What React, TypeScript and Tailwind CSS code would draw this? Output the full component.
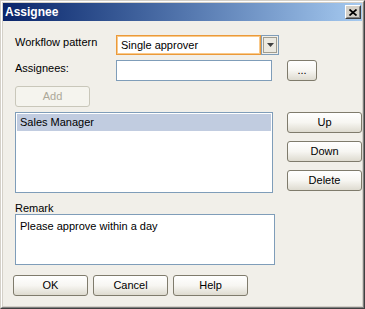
import React from "react";

const font = { fontFamily: '"Liberation Sans", Arial, sans-serif' };

function Btn({ children, className = "", disabled = false }: { children: React.ReactNode; className?: string; disabled?: boolean }) {
  return (
    <div
      className={
        "h-[21px] w-[75px] flex items-center justify-center rounded-[3px] border text-[11px] leading-[13px] " +
        (disabled
          ? "border-[#c9c7ba] bg-[#f5f4ee] text-[#aca899] "
          : "border-[#7f7b6c] bg-gradient-to-b from-white via-[#f7f6f2] to-[#dedbd0] text-black ") +
        className
      }
    >
      {children}
    </div>
  );
}

export default function App() {
  return (
    <div style={font} className="w-[365px] h-[309px] border border-t-[#d4d0c8] border-l-[#d4d0c8] border-r-[#404040] border-b-[#404040]">
      <div className="w-full h-full border border-t-white border-l-white border-r-[#808080] border-b-[#808080]">
        <div className="w-full h-full border border-[#d4d0c8] flex flex-col bg-[#f1efe9]">
          {/* Title bar */}
          <div className="h-[18px] flex items-center bg-gradient-to-r from-[#0a246a] to-[#a6caf0] shrink-0">
            <span className="pl-[2px] text-[12px] leading-[18px] font-bold text-white">Assignee</span>
            <div className="ml-auto mr-[1px] w-[16px] h-[14px] bg-[#d4d0c8] border border-t-white border-l-white border-r-[#404040] border-b-[#404040] flex">
              <div className="w-full h-full border border-t-[#d4d0c8] border-l-[#d4d0c8] border-r-[#808080] border-b-[#808080] flex items-center justify-center">
                <svg width="8" height="7" viewBox="0 0 8 7">
                  <path d="M0.5 0.5 L7.5 6.5 M7.5 0.5 L0.5 6.5" stroke="black" strokeWidth="1.7" />
                </svg>
              </div>
            </div>
          </div>

          {/* Body */}
          <div className="flex flex-col pl-[12px] pt-[14px] text-[11px] leading-[13px] text-black">
            {/* Row 1 */}
            <div className="flex items-start h-[20px]">
              <div className="w-[101px] pt-[1px]">Workflow pattern</div>
              <div className="flex h-[20px]">
                <div className="w-[145px] h-full border border-[#eb9a3a] bg-white shadow-[inset_0_0_0_1px_#f9c98a] flex items-center pl-[4px]">
                  Single approver
                </div>
                <div className="w-[18px] h-full border border-[#7f9db9] p-[1px]">
                  <div className="w-full h-full border border-[#a09d90] bg-[#ebe9e1] flex items-center justify-center">
                    <svg width="7" height="4" viewBox="0 0 7 4">
                      <path d="M0 0 H7 L3.5 4 Z" fill="#404040" />
                    </svg>
                  </div>
                </div>
              </div>
            </div>

            {/* Row 2 */}
            <div className="flex items-start h-[21px] mt-[5px]">
              <div className="w-[101px] pt-[2px]">Assignees:</div>
              <div className="w-[156px] h-[21px] border border-[#7f9db9] bg-white" />
              <Btn className="ml-[15px] !w-[30px]">...</Btn>
            </div>

            {/* Row 3 */}
            <div className="mt-[5px]">
              <Btn disabled>Add</Btn>
            </div>

            {/* Row 4 */}
            <div className="flex items-start mt-[5px]">
              <div className="w-[258px] h-[81px] border border-[#7f9db9] bg-white p-[1px]">
                <div className="h-[17px] leading-[17px] bg-[#c1cce0] pl-[3px]">Sales Manager</div>
              </div>
              <div className="ml-[14px] flex flex-col gap-[8px]">
                <Btn>Up</Btn>
                <Btn>Down</Btn>
                <Btn>Delete</Btn>
              </div>
            </div>

            {/* Remark */}
            <div className="mt-[9px] leading-[12px]">Remark</div>
            <div className="w-[260px] h-[51px] border border-[#7f9db9] bg-white pl-[4px] pt-[4px] leading-[14px]">
              Please approve within a day
            </div>

            {/* Bottom buttons */}
            <div className="flex gap-[5px] mt-[10px] -ml-[2px]">
              <Btn>OK</Btn>
              <Btn>Cancel</Btn>
              <Btn>Help</Btn>
            </div>
          </div>
        </div>
      </div>
    </div>
  );
}
